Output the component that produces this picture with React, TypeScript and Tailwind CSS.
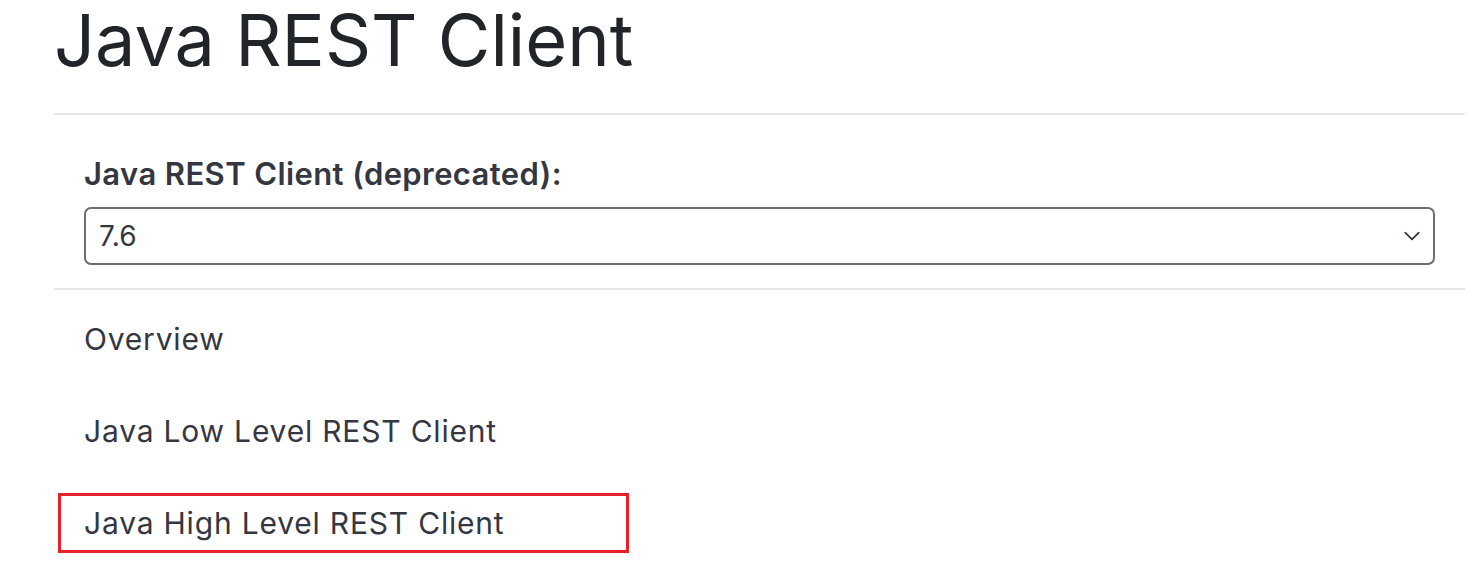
import React from 'react';

const items = ['Overview', 'Java Low Level REST Client', 'Java High Level REST Client'];

const App: React.FC = () => {
  return (
    <div className="min-h-[566px] bg-white text-[#212529]" style={{ fontFamily: 'Inter, "Noto Sans", sans-serif' }}>
      <div className="pl-[54px] w-[1465px]">
        {/* Title */}
        <h1 className="text-[72px] leading-[88px] font-normal h-[117px] -mt-[4px]">
          Java REST Client
        </h1>
        <div className="h-[2px] bg-[#e6e6e6]" />

        {/* Version picker */}
        <div className="px-[30px] pt-[41px] pb-[23px]">
          <label className="block text-[31px] leading-[36px] font-semibold tracking-[0.4px] text-[#343741] mb-[15px]">
            Java REST Client (deprecated):
          </label>
          <div className="relative h-[58px] rounded-[7px] border-2 border-[#6e6e6e] flex items-center pl-[13px]">
            <span className="text-[28px] tracking-[0.3px] text-[#343741]">7.6</span>
            <svg className="absolute right-[12px] top-1/2 -translate-y-1/2 w-[18px] h-[18px]" viewBox="0 0 16 16" fill="none">
              <path d="M2 5l6 6 6-6" stroke="#343741" strokeWidth="1.6" strokeLinecap="round" strokeLinejoin="round" />
            </svg>
          </div>
        </div>
        <div className="h-[2px] bg-[#e6e6e6]" />

        {/* Nav list */}
        <ul className="pt-[31px]">
          {items.map((item, i) => (
            <li key={item} className="h-[92px]">
              <div
                className={
                  i === 2
                    ? 'flex items-center h-[60px] w-[571px] ml-[4px] pl-[23px] border-[3px] border-[#e8202a] -mt-[12px]'
                    : 'flex items-center pl-[30px]'
                }
              >
                <span className="text-[30px] leading-[36px] tracking-[0.8px] text-[#343741]">{item}</span>
              </div>
            </li>
          ))}
        </ul>
      </div>
    </div>
  );
};

export default App;
